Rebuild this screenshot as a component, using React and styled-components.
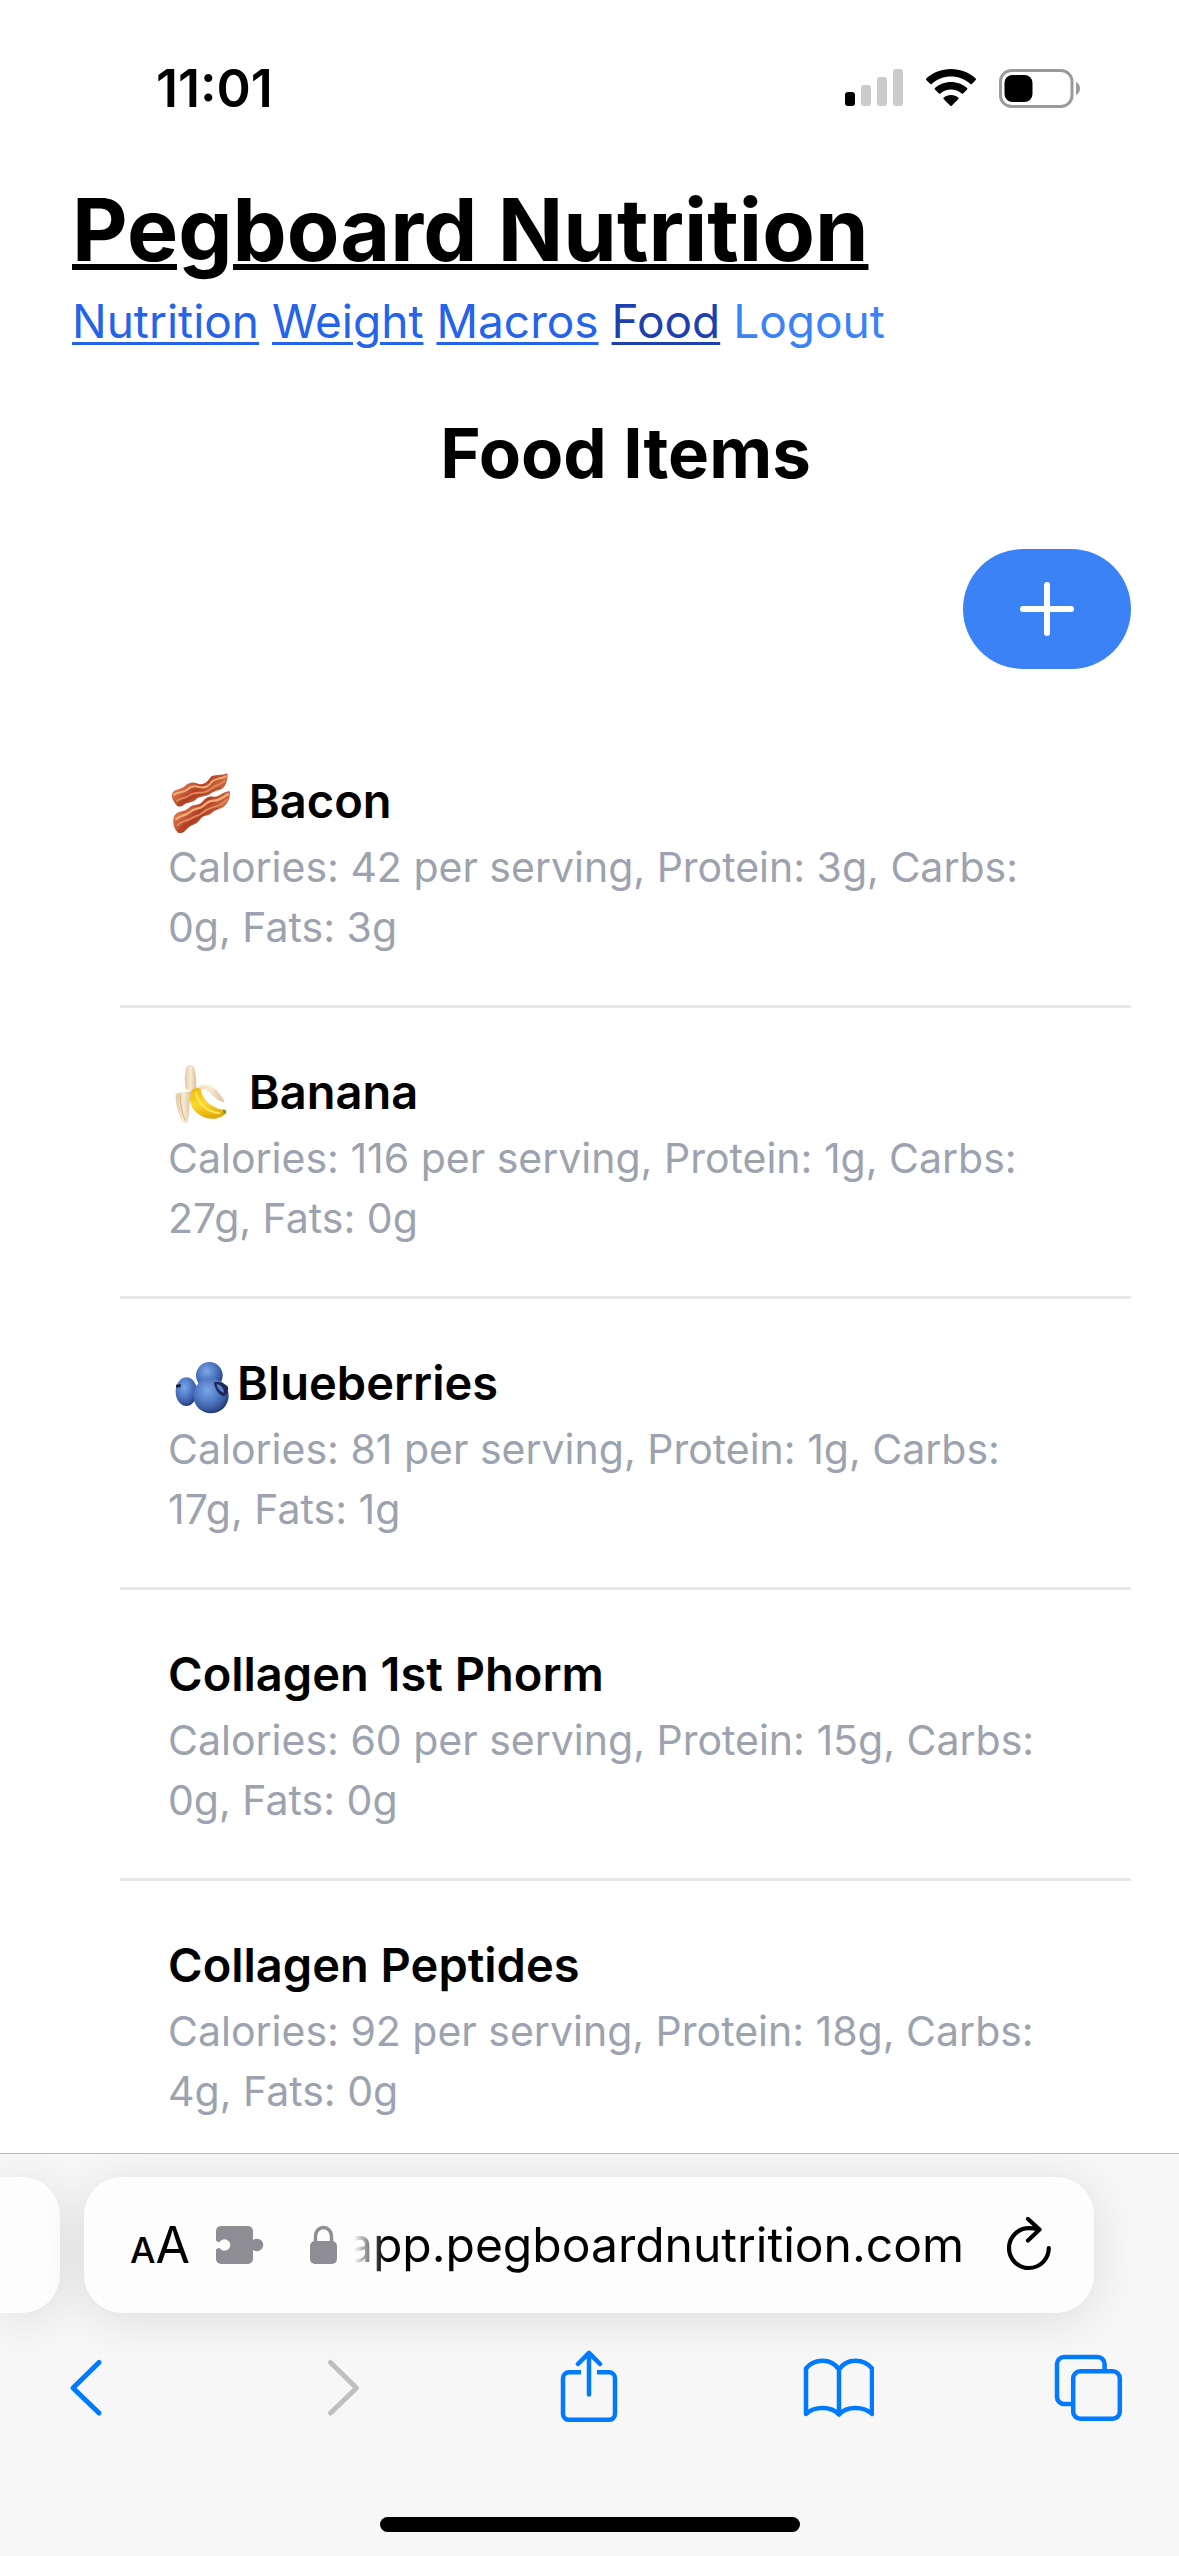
import React from 'react';
import styled, { createGlobalStyle } from 'styled-components';

const GlobalStyle = createGlobalStyle`
  * {
    box-sizing: border-box;
  }
  body {
    margin: 0;
    background-color: #fff;
    color: #000;
    font-family: Inter, "Liberation Sans", sans-serif;
  }
  h1, h2, h3, p, ul {
    margin: 0;
    padding: 0;
    font-weight: inherit;
  }
  button {
    padding: 0;
    border: none;
    background: none;
    color: inherit;
    font: inherit;
    cursor: pointer;
  }
  svg {
    display: block;
    flex: none;
  }
`
const Screen = styled.div`
  display: flex;
  flex-direction: column;
  height: 100vh;
  overflow: hidden;
`
const StatusBar = styled.div`
  flex: none;
  display: flex;
  align-items: center;
  justify-content: space-between;
  height: 176px;
  padding: 0 98px 0 156px;
`
const Time = styled.span`
  font-size: 52px;
  font-weight: 600;
`
const StatusIcons = styled.div`
  display: flex;
  align-items: center;
  gap: 23px;
`
const Page = styled.main`
  flex: 1;
  min-height: 0;
  overflow-y: auto;
  scrollbar-width: none;
`
const Header = styled.header`
  padding: 0 72px;
`
const Title = styled.h1`
  font-size: 86px;
  font-weight: 700;
  line-height: 108px;
  text-decoration: underline;
  text-decoration-thickness: 6px;
  text-underline-offset: 3px;
`
const Nav = styled.nav`
  display: flex;
  flex-wrap: wrap;
  column-gap: 13px;
  font-size: 46px;
  line-height: 74px;
`
const NavLink = styled.a`
  color: ${props => props.$active ? '#1e40af' : '#2563eb'};
  text-decoration: underline;
  text-decoration-thickness: 3px;
  text-underline-offset: 4px;
`
const Logout = styled.button`
  color: #3b82f6;
`
const Content = styled.section`
  display: flex;
  flex-direction: column;
  gap: 48px;
  padding: 47px 48px 48px 120px;
`
const Heading = styled.h2`
  font-size: 69px;
  font-weight: 700;
  line-height: 96px;
  text-align: center;
`
const AddButton = styled.button`
  display: flex;
  align-items: center;
  align-self: flex-end;
  justify-content: center;
  width: 168px;
  height: 120px;
  border-radius: 60px;
  background-color: #3b82f6;
`
const FoodList = styled.ul`
  list-style: none;
`
const FoodRow = styled.li`
  padding: 48px;
  border-bottom: 3px solid #e5e7eb;
`
const FoodName = styled.h3`
  display: flex;
  align-items: center;
  gap: 5px;
  font-size: 47px;
  font-weight: 600;
  line-height: 72px;
  white-space: pre;
`
const FoodDetails = styled.p`
  color: #9ca3af;
  font-size: 41px;
  line-height: 60px;
`
const BrowserBar = styled.footer`
  flex: none;
  padding: 23px 0 24px;
  border-top: 1px solid #b9b9b9;
  background-color: #f7f7f7;
  overflow: hidden;
`
const TabStrip = styled.div`
  display: flex;
  gap: 24px;
  height: 136px;
  padding-right: 85px;
`
const PreviousTab = styled.div`
  width: 60px;
  border-radius: 0 38px 38px 0;
  background-color: #fdfdfd;
  box-shadow: 0 6px 48px rgba(0, 0, 0, 0.11);
`
const AddressBar = styled.div`
  flex: 1;
  min-width: 0;
  display: flex;
  align-items: center;
  padding: 0 43px 0 46px;
  border-radius: 38px;
  background-color: #fdfdfd;
  box-shadow: 0 6px 48px rgba(0, 0, 0, 0.11);
`
const TextSize = styled.button`
  display: flex;
  align-items: baseline;
  width: 60px;
  margin-right: 26px;
  font-size: 50px;
`
const SmallLetter = styled.span`
  font-size: 36px;
  font-weight: 500;
`
const Extensions = styled.button`
  margin-right: 46px;
`
const Address = styled.input`
  flex: 1;
  min-width: 0;
  margin-right: 43px;
  padding: 0;
  border: none;
  outline: none;
  background: none;
  color: #000;
  font: inherit;
  font-size: 48px;
  line-height: 72px;
  text-align: right;
  mask-image: linear-gradient(to right, transparent 16px, #000 46px);
`
const Toolbar = styled.div`
  display: flex;
  justify-content: space-between;
  margin: 37px 55px 95px 52px;
`
const ToolButton = styled.button`
  color: ${props => props.disabled ? '#bfbfbf' : '#007aff'};
`
const HomeIndicator = styled.div`
  width: 420px;
  height: 15px;
  margin: 0 auto;
  border-radius: 8px;
  background-color: #000;
`

const Bacon = () => (
  <svg width="64" height="64" viewBox="24 24 192 192" role="img" aria-label="bacon">
    <defs>
      <linearGradient id="bacon" x1="0" y1="0" x2="1" y2="0.6">
        <stop offset="0" stopColor="#b9492b" />
        <stop offset="0.3" stopColor="#d8744a" />
        <stop offset="0.55" stopColor="#b33f26" />
        <stop offset="0.8" stopColor="#cf6a42" />
        <stop offset="1" stopColor="#a63a22" />
      </linearGradient>
    </defs>
    <g fill="url(#bacon)">
      <path d="M36 98C44 82 60 88 74 76C86 64 98 62 114 68C132 74 142 62 152 48C162 38 186 46 202 36C204 52 200 70 190 80C178 90 162 88 150 100C138 108 120 104 106 117C92 128 80 122 70 133C62 138 54 138 49 132C42 122 33 110 36 98Z" />
      <path d="M43 164C56 146 74 154 86 141C98 127 112 135 124 125C136 112 144 104 160 107C178 109 188 92 209 90C212 106 206 121 196 133C184 147 168 142 156 156C142 168 130 160 120 176C108 193 92 189 80 205C72 215 62 219 54 215C40 202 36 180 43 164Z" />
    </g>
    <g fill="none" strokeLinecap="round">
      <path d="M42 101C56 92 68 96 80 87C92 75 104 73 116 78C136 82 146 76 158 60C168 52 184 54 197 46" stroke="#efae78" strokeWidth="6" />
      <path d="M50 120C64 108 78 113 90 102C104 92 116 96 132 94C150 91 154 79 170 73C180 69 188 66 194 60" stroke="#e08c5a" strokeWidth="5" />
      <path d="M56 128C68 118 82 119 94 111C108 102 124 102 142 97C156 91 164 84 180 80" stroke="#a23a24" strokeWidth="3" />
      <path d="M49 174C60 162 76 166 90 153C102 140 116 146 128 136C142 124 150 118 164 119C182 118 190 106 204 100" stroke="#efae78" strokeWidth="7" />
      <path d="M52 194C66 176 82 182 96 171C108 163 118 165 130 153C144 141 156 141 170 135C184 133 190 125 200 117" stroke="#e0905e" strokeWidth="5" />
      <path d="M58 208C68 190 86 192 98 182C110 174 120 167 132 161C146 153 156 147 172 142" stroke="#a23a24" strokeWidth="3" />
    </g>
  </svg>
)

const Banana = () => (
  <svg width="64" height="64" viewBox="24 27 192 192" role="img" aria-label="banana">
    <defs>
      <linearGradient id="fruit" x1="0.2" y1="0" x2="0.5" y2="1">
        <stop offset="0" stopColor="#eebd14" />
        <stop offset="0.5" stopColor="#fbd92c" />
        <stop offset="1" stopColor="#e2a70b" />
      </linearGradient>
      <linearGradient id="peel" x1="0" y1="0" x2="1" y2="0">
        <stop offset="0" stopColor="#e3c9a3" />
        <stop offset="0.5" stopColor="#f7ead3" />
        <stop offset="1" stopColor="#dcc09a" />
      </linearGradient>
    </defs>
    <path d="M78 116C72 90 74 62 80 48C85 38 98 40 103 52C109 72 110 98 108 120Z" fill="url(#peel)" />
    <path d="M104 114C118 98 146 96 162 110C174 122 190 140 194 155C176 150 160 140 150 126C138 112 124 110 112 122Z" fill="url(#peel)" />
    <path d="M112 112C130 98 150 104 164 116" stroke="#fff4df" strokeWidth="4" fill="none" />
    <path d="M90 122C98 112 112 108 122 114C126 142 148 168 188 176C194 174 199 179 199 184C196 192 188 196 182 198C150 212 116 198 98 172C90 158 88 138 90 122Z" fill="url(#fruit)" />
    <path d="M108 124C112 152 136 182 180 187" stroke="#ffe85c" strokeWidth="6" fill="none" />
    <path d="M188 176C196 174 201 180 198 186L191 189Z" fill="#86913b" />
    <path d="M47 130C60 120 84 124 94 120C88 140 90 186 83 210C80 218 71 218 66 208C52 184 46 152 47 130Z" fill="url(#peel)" />
    <path d="M60 130C61 160 66 186 75 208" stroke="#cfae85" strokeWidth="3" fill="none" />
  </svg>
)

const Blueberries = () => (
  <svg width="64" height="64" viewBox="24 30 192 192" role="img" aria-label="blueberries">
    <defs>
      <radialGradient id="berry" cx="0.4" cy="0.35" r="0.65">
        <stop offset="0" stopColor="#7ba6e8" />
        <stop offset="0.45" stopColor="#5580ca" />
        <stop offset="0.8" stopColor="#3c5da3" />
        <stop offset="1" stopColor="#263c78" />
      </radialGradient>
    </defs>
    <ellipse cx="79" cy="152" rx="32" ry="43" fill="url(#berry)" />
    <path d="M48 131L63 130L61 139L49 140Z" fill="#101b3a" />
    <circle cx="148" cy="103" r="40" fill="url(#berry)" />
    <ellipse cx="153" cy="164" rx="53" ry="53" fill="url(#berry)" />
    <path d="M162 124C176 120 196 128 204 138C206 152 200 162 190 166C174 160 164 144 162 124Z" fill="#1b2a58" />
    <path d="M170 130C180 130 191 138 192 156C181 152 172 144 170 130Z" fill="#5c7fc0" />
  </svg>
)

const SignalIcon = () => (
  <svg width="58" height="38" viewBox="0 0 58 38" fill="#cbcbcb">
    <rect x="0" y="23" width="10" height="14" rx="3" fill="#000" />
    <rect x="16" y="16" width="10" height="21" rx="3" />
    <rect x="32" y="8" width="10" height="29" rx="3" />
    <rect x="48" y="0" width="10" height="37" rx="3" />
  </svg>
)

const WifiIcon = () => (
  <svg width="50" height="38" viewBox="0 0 50 38">
    <path d="M25 0C34.500 0 43.200 3.500 49.700 9.500Q50.300 10.200 49.700 10.900L45.800 15Q45.100 15.600 44.400 15C39 10.200 32.300 7.600 25 7.600S11 10.200 5.600 15Q4.900 15.600 4.200 15L.3 10.900Q-.3 10.200 .3 9.500C6.800 3.500 15.500 0 25 0Z" />
    <path d="M25 13C31.200 13 36.800 15.300 41.100 19.100Q41.700 19.800 41.100 20.400L37.100 24.400Q36.400 25 35.700 24.400C32.700 21.900 29 20.500 25 20.500S17.300 21.900 14.300 24.400Q13.600 25 12.900 24.400L8.900 20.400Q8.300 19.800 8.900 19.100C13.200 15.300 18.800 13 25 13Z" />
    <path d="M25 26C27.800 26 30.400 27 32.400 28.700Q33 29.300 32.400 30L25.700 36.700Q25 37.300 24.300 36.700L17.600 30Q17 29.300 17.600 28.700C19.600 27 22.200 26 25 26Z" />
  </svg>
)

const BatteryIcon = () => (
  <svg width="82" height="39" viewBox="0 0 82 39">
    <rect x="1.500" y="1.500" width="71.500" height="36" rx="11" fill="none" stroke="#9b9b9b" strokeWidth="3" />
    <path d="M77 13C79.500 14.200 81 16.500 81 19.500S79.500 24.800 77 26Z" fill="#9b9b9b" />
    <rect x="5.500" y="6" width="28" height="27" rx="8" />
  </svg>
)

const PlusIcon = () => (
  <svg width="54" height="54" viewBox="0 0 54 54" stroke="#fff" strokeWidth="6" strokeLinecap="round">
    <path d="M27 3v48M3 27h48" />
  </svg>
)

const PuzzleIcon = () => (
  <svg width="48" height="40" viewBox="0 0 48 40" fill="#8e8d93">
    <rect x="0" y="1" width="37" height="38" rx="5" />
    <circle cx="41" cy="20" r="6.200" />
    <path d="M35 15.500C37 17 38 16.500 39 15V25C38 23.500 37 23 35 24.500Z" />
    <circle cx="8.500" cy="20" r="5.800" fill="#fdfdfd" />
    <path d="M0 15.500C2 17.500 3.500 17.500 6 15.500V24.500C3.500 22.500 2 22.500 0 24.500Z" fill="#fdfdfd" />
  </svg>
)

const LockIcon = () => (
  <svg width="28" height="40" viewBox="0 0 28 40">
    <rect x="0" y="16" width="27" height="23" rx="5" fill="#8e8d93" />
    <path d="M5.500 18V11a8 8.500 0 0 1 16 0v7" fill="none" stroke="#8e8d93" strokeWidth="3.400" />
  </svg>
)

const ReloadIcon = () => (
  <svg width="44" height="60" viewBox="1 0 44 60" fill="none" stroke="#000" strokeWidth="4.200" strokeLinecap="round" strokeLinejoin="round">
    <path d="M42.800 33A19.900 19.900 0 1 1 23 13.200Q28 13.200 33 14.500M22 4L33.500 14.500L22 25.500" />
  </svg>
)

const ToolIcon = ({ children }) => (
  <svg width="72" height="72" viewBox="0 0 72 72" fill="none" stroke="currentColor" strokeWidth="4.500" strokeLinecap="round" strokeLinejoin="round">
    {children}
  </svg>
)

const foods = [
  { name: 'Bacon', spaced: true, Icon: Bacon, calories: 42, protein: 3, carbs: 0, fats: 3 },
  { name: 'Banana', spaced: true, Icon: Banana, calories: 116, protein: 1, carbs: 27, fats: 0 },
  { name: 'Blueberries', Icon: Blueberries, calories: 81, protein: 1, carbs: 17, fats: 1 },
  { name: 'Collagen 1st Phorm', calories: 60, protein: 15, carbs: 0, fats: 0 },
  { name: 'Collagen Peptides', calories: 92, protein: 18, carbs: 4, fats: 0 },
]

const Food = ({ name, spaced, Icon, calories, protein, carbs, fats }) => (
  <FoodRow>
    <FoodName>
      {Icon && <Icon />}
      <span>{spaced ? ` ${name}` : name}</span>
    </FoodName>
    <FoodDetails>
      {`Calories: ${calories} per serving, Protein: ${protein}g, Carbs: ${carbs}g, Fats: ${fats}g`}
    </FoodDetails>
  </FoodRow>
)

const SafariBar = () => (
  <BrowserBar>
    <TabStrip>
      <PreviousTab />
      <AddressBar>
        <TextSize type="button" aria-label="Page settings">
          <SmallLetter>A</SmallLetter>
          <span>A</span>
        </TextSize>
        <Extensions type="button" aria-label="Extensions"><PuzzleIcon /></Extensions>
        <LockIcon />
        <Address type="text" aria-label="Address" defaultValue="app.pegboardnutrition.com" />
        <button type="button" aria-label="Reload"><ReloadIcon /></button>
      </AddressBar>
    </TabStrip>
    <Toolbar>
      <ToolButton type="button" aria-label="Back">
        <ToolIcon><path d="M47 12.500L21 38L47 63" strokeWidth="5" /></ToolIcon>
      </ToolButton>
      <ToolButton type="button" aria-label="Forward" disabled>
        <ToolIcon><path d="M28.500 12.500L54.500 38L28.500 63" strokeWidth="5" /></ToolIcon>
      </ToolButton>
      <ToolButton type="button" aria-label="Share">
        <ToolIcon>
          <path d="M29 22.300H17a6 6 0 0 0-6 6v35.500a6 6 0 0 0 6 6h40a6 6 0 0 0 6-6v-35.500a6 6 0 0 0-6-6H45" strokeLinecap="butt" />
          <path d="M37 3V44.500M26 14L37 2.800L48 14" />
        </ToolIcon>
      </ToolButton>
      <ToolButton type="button" aria-label="Bookmarks">
        <ToolIcon>
          <path d="M37 19.500C33 13.500 27 10.800 20.500 10.800S8 13.500 4 18.500V64C8 60 14 58 20.500 58S33 60 37 64.500C41 60 47 58 53.500 58S66 60 70 64V18.500C66 13.500 60 10.800 53.500 10.800S41 13.500 37 19.500V64.500" />
        </ToolIcon>
      </ToolButton>
      <ToolButton type="button" aria-label="Tabs">
        <ToolIcon>
          <rect x="21.200" y="21.300" width="46.600" height="47.400" rx="7" />
          <path d="M52.600 20V14a7 7 0 0 0-7-7H12a7 7 0 0 0-7 7V47a7 7 0 0 0 7 7h8" strokeLinecap="butt" />
        </ToolIcon>
      </ToolButton>
    </Toolbar>
    <HomeIndicator />
  </BrowserBar>
)

const App = () => {
  return (
    <>
      <GlobalStyle />
      <Screen>
        <StatusBar>
          <Time>11:01</Time>
          <StatusIcons>
            <SignalIcon />
            <WifiIcon />
            <BatteryIcon />
          </StatusIcons>
        </StatusBar>
        <Page>
          <Header>
            <Title>Pegboard Nutrition</Title>
            <Nav>
              <NavLink href="#nutrition">Nutrition</NavLink>
              <NavLink href="#weight">Weight</NavLink>
              <NavLink href="#macros">Macros</NavLink>
              <NavLink href="#food" $active>Food</NavLink>
              <Logout type="button">Logout</Logout>
            </Nav>
          </Header>
          <Content>
            <Heading>Food Items</Heading>
            <AddButton type="button" aria-label="Add food"><PlusIcon /></AddButton>
            <FoodList>
              {foods.map(food => <Food key={food.name} {...food} />)}
            </FoodList>
          </Content>
        </Page>
        <SafariBar />
      </Screen>
    </>
  )
}

export default App
